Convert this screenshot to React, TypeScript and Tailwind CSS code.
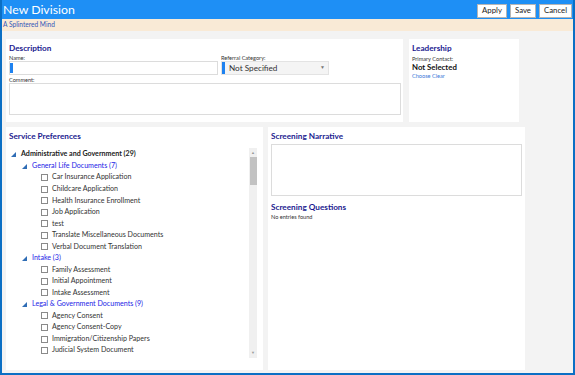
import React from "react";

const font = { fontFamily: 'Lato, "Noto Sans", sans-serif' };

type Row = { level: 0 | 1 | 2; label: string };

const TREE: Row[] = [
  { level: 0, label: "Administrative and Government (29)" },
  { level: 1, label: "General Life Documents (7)" },
  { level: 2, label: "Car Insurance Application" },
  { level: 2, label: "Childcare Application" },
  { level: 2, label: "Health Insurance Enrollment" },
  { level: 2, label: "Job Application" },
  { level: 2, label: "test" },
  { level: 2, label: "Translate Miscellaneous Documents" },
  { level: 2, label: "Verbal Document Translation" },
  { level: 1, label: "Intake (3)" },
  { level: 2, label: "Family Assessment" },
  { level: 2, label: "Initial Appointment" },
  { level: 2, label: "Intake Assessment" },
  { level: 1, label: "Legal & Government Documents (9)" },
  { level: 2, label: "Agency Consent" },
  { level: 2, label: "Agency Consent-Copy" },
  { level: 2, label: "Immigration/Citizenship Papers" },
  { level: 2, label: "Judicial System Document" },
];

function Expander() {
  return (
    <svg width="5" height="5" viewBox="0 0 5 5" className="shrink-0">
      <polygon points="5,0 5,5 0,5" fill="#2f6db5" />
    </svg>
  );
}

function TreeRow({ row }: { row: Row }) {
  if (row.level === 2) {
    return (
      <div className="flex h-[11.53px] items-center pl-[32px]">
        <span className="mr-[4px] h-[7px] w-[7px] shrink-0 border border-[#8a8a8a] bg-white" />
        <span className="text-[7.1px] text-[#333]">{row.label}</span>
      </div>
    );
  }
  return (
    <div
      className={`flex h-[11.53px] items-center ${row.level === 0 ? "pl-[2px]" : "pl-[13px]"}`}
    >
      <Expander />
      <span
        className={
          row.level === 0
            ? "ml-[5px] text-[7.1px] font-bold text-[#222]"
            : "ml-[5px] text-[7.1px] text-[#2323e6]"
        }
      >
        {row.label}
      </span>
    </div>
  );
}

function Title({ children }: { children: React.ReactNode }) {
  return (
    <h2 className="text-[8.2px] font-bold leading-[12px] text-[#1b1b8f]">{children}</h2>
  );
}

function Button({ children }: { children: React.ReactNode }) {
  return (
    <button className="flex h-[14px] items-center border border-[#b5b5b5] bg-white px-[4px] text-[7.8px] text-[#222]">
      {children}
    </button>
  );
}

export default function App() {
  return (
    <div
      style={font}
      className="flex h-[375px] w-[575px] flex-col overflow-hidden border-x-2 border-b-2 border-[#0b6fc4] bg-[#f3f3f3]"
    >
      <header className="flex h-[19px] shrink-0 items-center justify-between bg-[#1e8ff5] pl-[1px] pr-[1px]">
        <h1 className="pt-[2px] text-[12.3px] leading-none text-white">New Division</h1>
        <div className="flex gap-[3px] pt-[2px]">
          <Button>Apply</Button>
          <Button>Save</Button>
          <Button>Cancel</Button>
        </div>
      </header>
      <div className="flex h-[12px] shrink-0 items-center bg-[#f9ead6] pl-[1px] text-[6.6px] text-[#3457b8]">
        A Splintered Mind
      </div>

      <main className="flex flex-1 flex-col gap-[5px] px-[4px] pt-[8px]">
        {/* top row */}
        <div className="flex gap-[6px]">
          <section className="h-[83px] w-[397px] bg-white px-[3px] pt-[3px]">
            <Title>Description</Title>
            <div className="flex gap-[3px]">
              <div className="w-[209px]">
                <div className="text-[5.6px] leading-[7px] text-[#333]">Name:</div>
                <div className="flex h-[14px] border border-[#dcdcdc] bg-white">
                  <span className="my-[1px] w-[3px] bg-[#1e82f0]" />
                </div>
              </div>
              <div className="w-[108px]">
                <div className="text-[5.6px] leading-[7px] text-[#333]">Referral Category:</div>
                <div className="flex h-[14px] items-center border border-[#e3e3e3] bg-[#f4f4f4]">
                  <span className="my-[1px] h-[12px] w-[3px] bg-[#1e82f0]" />
                  <span className="ml-[4px] flex-1 text-[8.2px] text-[#333]">Not Specified</span>
                  <span className="mr-[3px] text-[5px] text-[#777]">▼</span>
                </div>
              </div>
            </div>
            <div className="mt-[1px] text-[5.6px] leading-[7px] text-[#333]">Comment:</div>
            <div className="h-[32px] w-[392px] border border-[#dcdcdc] bg-white" />
          </section>

          <section className="h-[83px] w-[110px] bg-white px-[3px] pt-[3px]">
            <Title>Leadership</Title>
            <div className="mt-[1px] text-[5.6px] leading-[8px] text-[#333]">Primary Contact:</div>
            <div className="text-[7.8px] font-bold leading-[9px] text-[#111]">Not Selected</div>
            <div className="text-[5.6px] leading-[8px] text-[#3a78d8]">Choose Clear</div>
          </section>
        </div>

        {/* bottom row */}
        <div className="flex gap-[5px]">
          <section className="flex h-[243px] w-[257px] flex-col bg-white px-[3px] pt-[3px]">
            <Title>Service Preferences</Title>
            <div className="mt-[6px] flex h-[210px]">
              <div className="flex-1 overflow-hidden pt-[1px]">
                {TREE.map((row) => (
                  <TreeRow key={row.label} row={row} />
                ))}
              </div>
              <div className="mr-[3px] flex w-[8px] flex-col items-center bg-[#f0f0f0]">
                <span className="mt-[1px] text-[4px] leading-[8px] text-[#999]">▲</span>
                <span className="h-[28px] w-[7px] bg-[#c2c2c2]" />
                <span className="flex-1" />
                <span className="mb-[1px] text-[4px] leading-[8px] text-[#999]">▼</span>
              </div>
            </div>
          </section>

          <section className="h-[243px] w-[257px] bg-white px-[3px] pt-[3px]">
            <Title>Screening Narrative</Title>
            <div className="mt-[2px] h-[52px] w-[251px] border border-[#dcdcdc] bg-white" />
            <div className="mt-[5px]">
              <Title>Screening Questions</Title>
            </div>
            <div className="text-[5.6px] leading-[8px] text-[#333]">No entries found</div>
          </section>
        </div>
      </main>
    </div>
  );
}
